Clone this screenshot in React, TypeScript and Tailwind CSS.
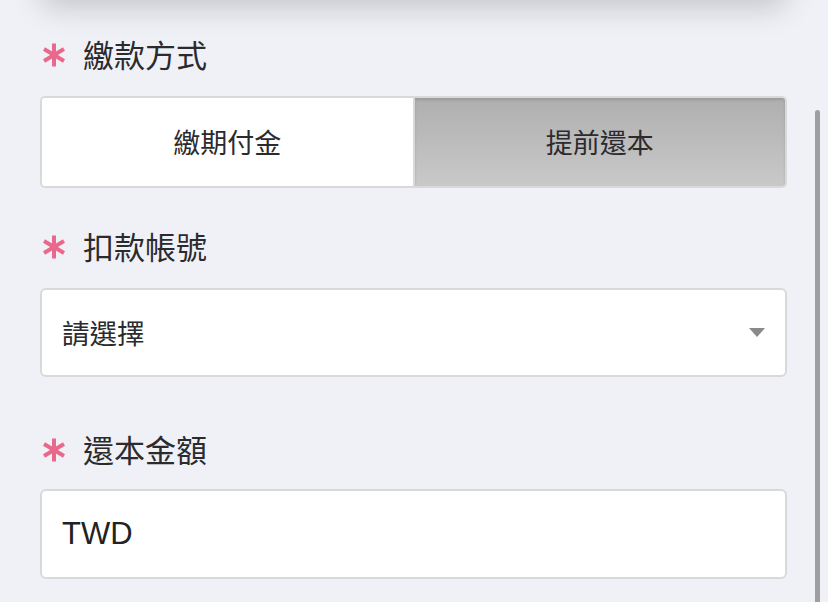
const CJK = "font-['Noto_Sans_CJK_TC','Noto_Sans_CJK_SC',sans-serif]";

const Asterisk = () => (
  <svg width="22" height="24" viewBox="0 0 22 24" className="shrink-0">
    <g stroke="#e8698c" strokeWidth="4" strokeLinecap="butt">
      <line x1="11" y1="0.5" x2="11" y2="23.5" />
      <line x1="1" y1="6" x2="21" y2="18" />
      <line x1="1" y1="18" x2="21" y2="6" />
    </g>
  </svg>
);

const Label = ({ text }: { text: string }) => (
  <div className="flex items-center gap-[18px] pl-[3px] h-[40px]">
    <Asterisk />
    <span className={`${CJK} text-[31px] leading-none text-[#2b2b2e] -mt-[3px]`}>{text}</span>
  </div>
);

export default function App() {
  return (
    <div className="relative w-[828px] h-[602px] overflow-hidden bg-[#f0f1f6]">
      {/* card above, only its shadow is in view */}
      <div className="mx-[40px] -mt-[60px] h-[60px] rounded-[16px] bg-[#f0f1f6] shadow-[0_8px_30px_rgba(0,0,0,0.18)]" />

      <div className="pl-[40px] pr-[41px] pt-[35px]">
        <Label text="繳款方式" />
        <div className="mt-[21px] flex h-[92px] rounded-[5px] border-2 border-[#d9d9dc] overflow-hidden">
          <div className={`${CJK} flex-1 flex items-center justify-center bg-white text-[27px] text-[#2b2b2e]`}>
            繳期付金
          </div>
          <div className="w-[2px] bg-[#d9d9dc]" />
          <div
            className={`${CJK} flex-1 flex items-center justify-center bg-gradient-to-b from-[#afafaf] to-[#c9c9c9] text-[27px] text-[#2b2b2e] shadow-[inset_0_2px_3px_rgba(0,0,0,0.12)]`}
          >
            提前還本
          </div>
        </div>

        <div className="mt-[39px]">
          <Label text="扣款帳號" />
        </div>
        <div className="mt-[21px] flex h-[89px] items-center justify-between rounded-[6px] border-2 border-[#d9d9dc] bg-white pl-[20px] pr-[20px]">
          <span className={`${CJK} text-[27.5px] text-[#2b2b2e]`}>請選擇</span>
          <svg width="16" height="9" viewBox="0 0 16 9">
            <path d="M0 0 H16 L8 9 Z" fill="#8a8a8c" />
          </svg>
        </div>

        <div className="mt-[53px]">
          <Label text="還本金額" />
        </div>
        <div className="mt-[19px] flex h-[90px] items-center rounded-[6px] border-2 border-[#d9d9dc] bg-white pl-[20px]">
          <span className="font-['Liberation_Sans',sans-serif] text-[31px] text-[#222]">TWD</span>
        </div>
      </div>

      {/* scroll indicator */}
      <div className="absolute left-[815px] top-[110px] w-[5px] h-[520px] rounded-full bg-[#9d9da2]" />
    </div>
  );
}
